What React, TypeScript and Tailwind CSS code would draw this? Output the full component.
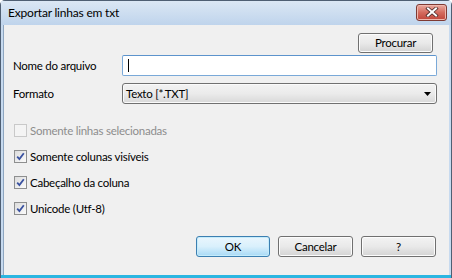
const font = { fontFamily: 'Lato, "Noto Sans", sans-serif' };

function Check({ checked, disabled, label }: { checked?: boolean; disabled?: boolean; label: string }) {
  return (
    <div className="flex h-[13px] items-center">
      <div
        className={
          disabled
            ? "h-[13px] w-[13px] border border-[#c9c9c9] bg-[#f4f4f4]"
            : "flex h-[13px] w-[13px] items-center justify-center border border-[#8e8f8f] bg-gradient-to-br from-[#dcdcdc] to-[#fbfbfb]"
        }
      >
        {checked && (
          <svg width="9" height="9" viewBox="0 0 9 9">
            <path d="M1.2 4.6 L3.4 7 L7.8 1.2" fill="none" stroke="#3a52a0" strokeWidth="1.8" />
          </svg>
        )}
      </div>
      <span className={"ml-[3px] text-[11.5px] leading-none tracking-[-0.25px] " + (disabled ? "text-[#8d8d8d]" : "text-black")}>{label}</span>
    </div>
  );
}

function Btn({ label, primary, w }: { label: string; primary?: boolean; w: string }) {
  return (
    <div
      className={
        "flex h-[21px] items-center justify-center rounded-[3px] border text-[11.5px] tracking-[-0.25px] text-black " +
        w +
        (primary
          ? " border-[#3c7fb1] bg-gradient-to-b from-[#eaf6fd] via-[#d9f0fc] to-[#a7d9f5] shadow-[inset_0_0_0_1px_#c5ecfb]"
          : " border-[#707070] bg-gradient-to-b from-[#f3f3f3] via-[#e9e9e9] to-[#d3d3d3] shadow-[inset_0_0_0_1px_#fcfcfc]")
      }
    >
      {label}
    </div>
  );
}

export default function App() {
  return (
    <div className="h-[278px] w-[452px] overflow-hidden bg-white" style={font}>
      <div className="flex h-full flex-col rounded-t-[5px] border-x border-t border-[#4f5f73] bg-[#c7daef]">
        {/* Title bar */}
        <div className="flex h-[24px] shrink-0 items-center justify-between bg-gradient-to-b from-[#dbe7f4] to-[#bfd4ec] pl-[7px] pr-[4px]">
          <span className="text-[12px] tracking-[-0.2px] text-black">Exportar linhas em txt</span>
          <div className="mt-[-2px] flex h-[17px] w-[31px] items-center justify-center rounded-[3px] border border-[#7f3a33] bg-gradient-to-b from-[#e9a99f] via-[#d46b5e] to-[#c0453a] shadow-[inset_0_0_0_1px_#eeb7ad]">
            <svg width="14" height="10" viewBox="0 0 14 10">
              <path d="M3 1.5 L11 8.5 M11 1.5 L3 8.5" stroke="#4a2a28" strokeWidth="3.6" strokeLinecap="square" />
              <path d="M3 1.5 L11 8.5 M11 1.5 L3 8.5" stroke="#ffffff" strokeWidth="2" strokeLinecap="square" />
            </svg>
          </div>
        </div>

        {/* Client area */}
        <div className="flex flex-1 flex-col border-b-[3px] border-b-[#2bb6e1] pl-[2px] pr-[2px]">
          <div className="flex flex-1 flex-col border-l border-[#8ea6c0] bg-[#f0f0f0] pb-[18px] pl-[9px] pr-[12px] pt-[8px] text-[11.5px] tracking-[-0.25px]">
            <div className="flex justify-end pr-[4px]">
              <div className="flex h-[20px] w-[75px] items-center justify-center rounded-[3px] border border-[#707070] bg-gradient-to-b from-[#f3f3f3] via-[#e9e9e9] to-[#d3d3d3] text-black shadow-[inset_0_0_0_1px_#fcfcfc]">
                Procurar
              </div>
            </div>

            <div className="mt-[2px] flex h-[21px] items-center">
              <span className="w-[109px] text-black">Nome do arquivo</span>
              <div className="flex h-[21px] flex-1 items-center rounded-[2px] border border-[#7aa9d8] border-t-[#5c93cc] bg-white pl-[5px]">
                <div className="h-[13px] w-px bg-black" />
              </div>
            </div>

            <div className="mt-[7px] flex h-[21px] items-center">
              <span className="w-[109px] text-black">Formato</span>
              <div className="flex h-[21px] flex-1 items-center justify-between rounded-[3px] border border-[#707070] bg-gradient-to-b from-[#f2f2f2] via-[#ebebeb] to-[#d8d8d8] pl-[3px] pr-[5px] shadow-[inset_0_0_0_1px_#fafafa]">
                <span className="text-black">Texto [*.TXT]</span>
                <svg width="7" height="4" viewBox="0 0 7 4">
                  <path d="M0 0 H7 L3.5 4 Z" fill="#000" />
                </svg>
              </div>
            </div>

            <div className="mt-[20px] flex flex-col gap-[13px] pl-[1px]">
              <Check disabled label="Somente linhas selecionadas" />
              <Check checked label="Somente colunas visíveis" />
              <Check checked label="Cabeçalho da coluna" />
              <Check checked label="Unicode (Utf-8)" />
            </div>

            <div className="mt-auto flex justify-end gap-[8px] pr-[1px]">
              <Btn label="OK" primary w="w-[74px]" />
              <Btn label="Cancelar" w="w-[75px]" />
              <Btn label="?" w="w-[75px]" />
            </div>
          </div>
        </div>
      </div>
    </div>
  );
}
